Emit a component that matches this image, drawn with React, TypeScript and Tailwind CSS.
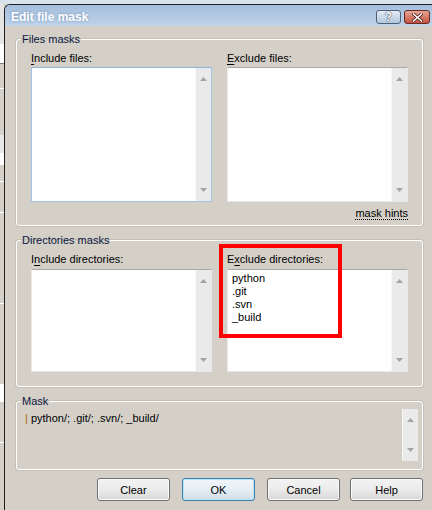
import React from "react";

function ScrollBar({ className }: { className: string }) {
  return (
    <div className={`w-[16px] shrink-0 bg-[#eaeaea] border-l border-[#f6f6f6] flex flex-col items-center justify-between py-[9px] ${className}`}>
      <svg width="7" height="4" viewBox="0 0 7 4">
        <path d="M3.5 0 L7 4 L0 4 Z" fill="#a4a4a4" />
      </svg>
      <svg width="7" height="4" viewBox="0 0 7 4">
        <path d="M0 0 L7 0 L3.5 4 Z" fill="#a4a4a4" />
      </svg>
    </div>
  );
}

function ListBox({
  className,
  items,
}: {
  className: string;
  items?: string[];
}) {
  return (
    <div className={`flex bg-white border ${className}`}>
      <div className="flex-1 flex flex-col pl-[4px] pt-[2px]">
        {(items || []).map((t) => (
          <div key={t} className="leading-[13px] text-black">
            {t}
          </div>
        ))}
      </div>
      <ScrollBar className="h-full" />
    </div>
  );
}

function Button({ label, focused }: { label: string; focused?: boolean }) {
  return (
    <div
      className={
        focused
          ? "w-[73px] h-[23px] rounded-[3px] border border-[#3c7fb1] bg-linear-to-b from-[#f0f6fa] via-[#e6eef4] to-[#cfdde8] shadow-[inset_0_0_0_1px_#b9e3f8] flex items-center justify-center pt-[2px] text-black"
          : "w-[73px] h-[23px] rounded-[3px] border border-[#707070] bg-linear-to-b from-[#f3f3f3] via-[#ebebeb] to-[#d6d6d6] shadow-[inset_0_0_0_1px_#fbfbfb] flex items-center justify-center pt-[2px] text-black"
      }
    >
      {label}
    </div>
  );
}

export default function App() {
  return (
    <div className="relative w-[432px] h-[510px] overflow-hidden flex flex-col bg-[#d4d0c8] font-['Liberation_Sans',Arial,sans-serif] text-[11px] leading-[13px] text-black">
      {/* backdrop top strip */}
      <div className="h-[4px] shrink-0 bg-[#dae2eb]" />
      <div className="flex flex-1 min-h-0">
        {/* backdrop left strip (other window) */}
        <div className="w-[4px] shrink-0 flex flex-col bg-[#d4d0c8]">
          <div className="h-[40px] bg-[#e4e4e4]" />
          <div className="h-[20px] bg-white border-b border-[#808080]" />
          <div className="h-[24px]" />
          <div className="h-[1px] bg-white" />
          <div className="h-[46px]" />
          <div className="h-[18px] bg-[#e8e8e8]" />
          <div className="h-[12px] bg-white" />
          <div className="h-[16px]" />
          <div className="h-[1px] bg-white" />
          <div className="h-[30px]" />
          <div className="h-[1px] bg-white" />
          <div className="h-[90px]" />
          <div className="h-[1px] bg-white" />
          <div className="h-[80px]" />
          <div className="h-[18px] bg-white" />
          <div className="h-[40px]" />
          <div className="h-[1px] bg-white" />
        </div>

        {/* dialog */}
        <div className="flex-1 flex flex-col border-l border-t border-[#202020] rounded-tl-[6px] overflow-hidden">
          {/* title bar */}
          <div className="h-[21px] shrink-0 flex items-start justify-between bg-linear-to-b from-[#a4bedc] to-[#bfd3ea] pl-[6px] pr-[2px]">
            <div className="pt-[5px] text-white font-bold text-[12px] leading-[14px] [text-shadow:0_0_3px_#6f8fb6]">
              Edit file mask
            </div>
            <div className="flex gap-[3px] pt-[5px]">
              <div className="w-[25px] h-[14px] rounded-[3px] border border-[#4f6078] bg-linear-to-b from-[#e4ecf6] to-[#b3c6dd] flex items-center justify-center text-white font-bold text-[12px] leading-[12px] [text-shadow:0_0_1px_#1e2a3a,0_0_1px_#1e2a3a]">
                ?
              </div>
              <div className="w-[26px] h-[14px] rounded-[3px] border border-[#6a2a24] bg-linear-to-b from-[#e5a596] to-[#c4513f] flex items-center justify-center">
                <svg width="11" height="9" viewBox="0 0 11 9">
                  <path d="M1.5 1 L9.5 8 M9.5 1 L1.5 8" stroke="#4a1a14" strokeWidth="3" strokeLinecap="square" />
                  <path d="M1.5 1 L9.5 8 M9.5 1 L1.5 8" stroke="#ffffff" strokeWidth="1.6" strokeLinecap="square" />
                </svg>
              </div>
            </div>
          </div>

          {/* body */}
          <div className="flex-1 bg-[#d4d0c8] pl-[11px] pt-[7px] flex flex-col">
            {/* Files masks */}
            <fieldset className="w-[407px] border border-white rounded-[3px] shadow-[0_0_0_1px_#c4c0b8]">
              <legend className="ml-[4px] px-[1px] text-[#0c1840]">Files masks</legend>
              <div className="px-[14px] pt-[6px] pb-[5px] flex flex-col">
                <div className="grid grid-cols-[181px_181px] gap-x-[15px]">
                  <div className="flex flex-col">
                    <div>
                      <span className="underline underline-offset-2">I</span>nclude files:
                    </div>
                    <ListBox className="mt-[2px] h-[135px] border-[#a3c4e4] border-t-[#8cb2d9]" />
                  </div>
                  <div className="flex flex-col">
                    <div>
                      <span className="underline underline-offset-2">E</span>xclude files:
                    </div>
                    <ListBox className="mt-[2px] h-[135px] border-[#e8e8e8] border-t-[#a8a8a8]" />
                  </div>
                </div>
                <div className="mt-[5px] flex justify-end">
                  <span className="underline decoration-dotted underline-offset-2">mask hints</span>
                </div>
              </div>
            </fieldset>

            {/* Directories masks */}
            <fieldset className="mt-[8px] w-[407px] border border-white rounded-[3px] shadow-[0_0_0_1px_#c4c0b8]">
              <legend className="ml-[4px] px-[1px] text-[#0c1840]">Directories masks</legend>
              <div className="px-[14px] pt-[6px] pb-[14px]">
                <div className="grid grid-cols-[181px_181px] gap-x-[15px]">
                  <div className="flex flex-col">
                    <div>
                      I<span className="underline underline-offset-2">n</span>clude directories:
                    </div>
                    <ListBox className="mt-[3px] h-[103px] border-[#e8e8e8] border-t-[#a8a8a8]" />
                  </div>
                  <div className="flex flex-col">
                    <div>
                      E<span className="underline underline-offset-2">x</span>clude directories:
                    </div>
                    <ListBox
                      className="mt-[3px] h-[103px] border-[#e8e8e8] border-t-[#a8a8a8]"
                      items={["python", ".git", ".svn", "_build"]}
                    />
                  </div>
                </div>
              </div>
            </fieldset>

            {/* Mask */}
            <fieldset className="mt-[8px] w-[407px] border border-white rounded-[3px] shadow-[0_0_0_1px_#c4c0b8]">
              <legend className="ml-[4px] px-[1px] text-[#0c1840]">Mask</legend>
              <div className="pl-[8px] pr-[4px] pt-[1px] pb-[8px] flex h-[61px]">
                <div className="flex-1 pt-[3px]">
                  <span className="text-[#b4620c]">|</span> python/; .git/; .svn/; _build/
                </div>
                <ScrollBar className="h-[52px]" />
              </div>
            </fieldset>

            {/* Buttons */}
            <div className="mt-[8px] w-[407px] flex justify-end">
              <Button label="Clear" />
              <div className="w-[12px]" />
              <Button label="OK" focused />
              <div className="w-[12px]" />
              <Button label="Cancel" />
              <div className="w-[10px]" />
              <Button label="Help" />
            </div>
          </div>
        </div>
      </div>

      {/* red highlight annotation overlay */}
      <div className="absolute left-[219px] top-[244px] w-[123px] h-[94px] border-[4px] border-[#ff0000] pointer-events-none" />
    </div>
  );
}
